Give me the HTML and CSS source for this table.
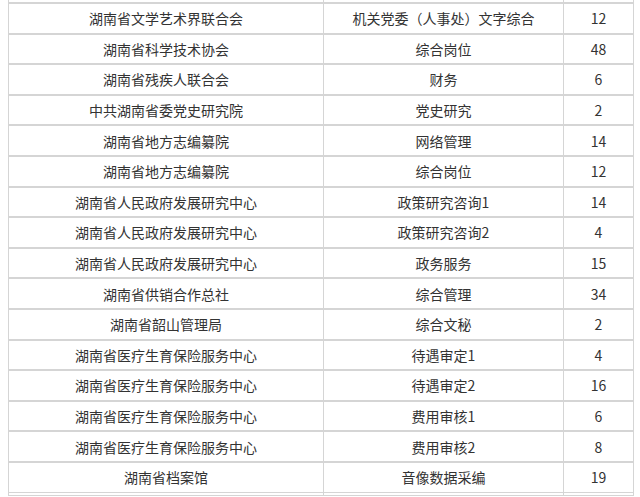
FILE: index.html
```html
<!DOCTYPE html>
<html lang="zh-CN">
<head>
<meta charset="utf-8">
<link rel="stylesheet" href="styles.css">
</head>
<body>
<table class="jobs">
<colgroup><col class="c-unit"><col class="c-post"><col class="c-num"></colgroup>
<tbody>
<tr class="spacer"><td></td><td></td><td></td></tr>
<tr><td>湖南省文学艺术界联合会</td><td>机关党委（人事处）文字综合</td><td>12</td></tr>
<tr><td>湖南省科学技术协会</td><td>综合岗位</td><td>48</td></tr>
<tr><td>湖南省残疾人联合会</td><td>财务</td><td>6</td></tr>
<tr><td>中共湖南省委党史研究院</td><td>党史研究</td><td>2</td></tr>
<tr><td>湖南省地方志编纂院</td><td>网络管理</td><td>14</td></tr>
<tr><td>湖南省地方志编纂院</td><td>综合岗位</td><td>12</td></tr>
<tr><td>湖南省人民政府发展研究中心</td><td>政策研究咨询1</td><td>14</td></tr>
<tr><td>湖南省人民政府发展研究中心</td><td>政策研究咨询2</td><td>4</td></tr>
<tr><td>湖南省人民政府发展研究中心</td><td>政务服务</td><td>15</td></tr>
<tr><td>湖南省供销合作总社</td><td>综合管理</td><td>34</td></tr>
<tr><td>湖南省韶山管理局</td><td>综合文秘</td><td>2</td></tr>
<tr><td>湖南省医疗生育保险服务中心</td><td>待遇审定1</td><td>4</td></tr>
<tr><td>湖南省医疗生育保险服务中心</td><td>待遇审定2</td><td>16</td></tr>
<tr><td>湖南省医疗生育保险服务中心</td><td>费用审核1</td><td>6</td></tr>
<tr><td>湖南省医疗生育保险服务中心</td><td>费用审核2</td><td>8</td></tr>
<tr><td>湖南省档案馆</td><td>音像数据采编</td><td>19</td></tr>
<tr class="spacer"><td></td><td></td><td></td></tr>
</tbody>
</table>
</body>
</html>
```
FILE: styles.css
```css
html, body {
  margin: 0;
  padding: 0;
  background: #fff;
}
body {
  padding-left: 8px;
  font-family: "Noto Sans CJK SC", "Microsoft YaHei", sans-serif;
  font-size: 14px;
  color: #333;
}
.jobs {
  border-collapse: collapse;
  table-layout: fixed;
  width: 625px;
}
.c-unit { width: 315px; }
.c-post { width: 240px; }
.c-num { width: 70px; }
.jobs td {
  border: 1px solid #d5d5d5;
  border-top-width: 2px;
  text-align: center;
  padding: 0;
  height: 28.6px;
  line-height: 20px;
  vertical-align: middle;
}
.jobs .spacer td {
  height: 2px;
  border-top: 0;
}
```
